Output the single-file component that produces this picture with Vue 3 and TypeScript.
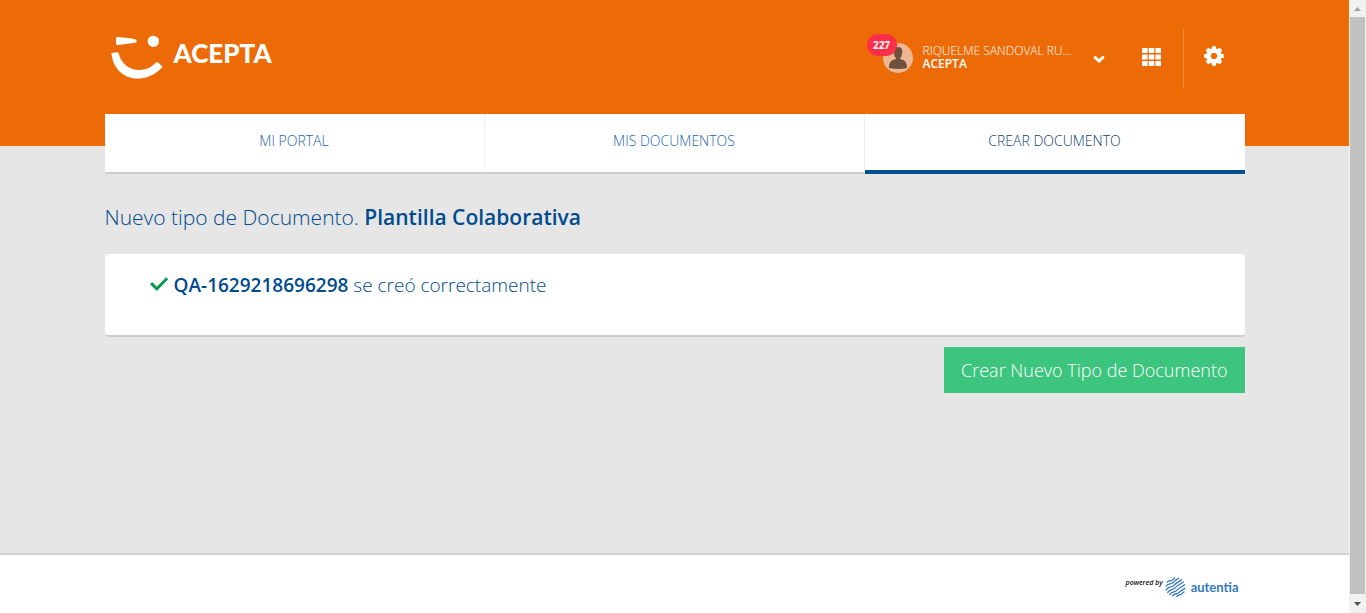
<script setup lang="ts">
interface Tab {
  label: string
  active: boolean
}

const tabs: Tab[] = [
  { label: 'MI PORTAL', active: false },
  { label: 'MIS DOCUMENTOS', active: false },
  { label: 'CREAR DOCUMENTO', active: true },
]

const user = { name: 'RIQUELME SANDOVAL RU...', company: 'ACEPTA', notifications: 227 }
const documentName = 'QA-1629218696298'
const gearTeeth = [0, 45, 90, 135, 180, 225, 270, 315]
</script>

<template>
  <div class="window">
    <div class="page">
      <header class="header">
        <div class="container">
          <div class="topbar">
            <a class="brand" href="#" aria-label="Acepta">
              <svg class="smile" viewBox="30 30 165 135" aria-hidden="true">
                <path d="M48 39 Q48 36 53 36 Q78 38 100 41 Q110 43 110 49 Q110 54 100 54 L54 60 Q48 61 48 56Z" fill="#fff" />
                <circle cx="160" cy="49" r="17" fill="#fff" />
                <path d="M34 84 L52 82 Q56 82 57 87 C67 137 133 151 165 115 Q170 109 175 113 L188 125 C141 180 45 175 34 84Z" fill="#fff" />
              </svg>
              <span class="brand-name">ACEPTA</span>
            </a>
            <div class="tools">
              <button class="user" type="button">
                <span class="avatar">
                  <svg viewBox="0 0 30 30" width="30" height="30" aria-hidden="true">
                    <circle cx="15" cy="15" r="15" fill="#ecb792" />
                    <path d="M15 4 C11 4 10 7 11 11 Q12 15 13 15 V16 C8 17 6 19 6 25 Q15 27 24 25 C24 19 22 17 17 16 V15 Q18 15 19 11 C20 7 19 4 15 4Z" fill="#6f503c" />
                  </svg>
                  <span class="badge">{{ user.notifications }}</span>
                </span>
                <span class="identity">
                  <span class="user-name">{{ user.name }}</span>
                  <strong>{{ user.company }}</strong>
                </span>
                <svg class="chevron" viewBox="0 0 12 8" width="12" height="8" aria-hidden="true">
                  <path d="M1.3 1.6 L6 6 L10.7 1.6" fill="none" stroke="#fff" stroke-width="2.9" />
                </svg>
              </button>
              <button class="apps" type="button" aria-label="Aplicaciones">
                <svg viewBox="0 0 19 18" width="19" height="18" fill="#fff" aria-hidden="true">
                  <template v-for="row in 3" :key="row">
                    <rect v-for="col in 3" :key="col" :x="(col - 1) * 6.7" :y="(row - 1) * 6.5" width="5.6" height="5" rx="0.4" />
                  </template>
                </svg>
              </button>
              <button class="settings" type="button" aria-label="Configuración">
                <svg viewBox="-10 -10 20 20" width="20" height="20" aria-hidden="true">
                  <circle r="5.4" fill="none" stroke="#fff" stroke-width="4.2" />
                  <path v-for="angle in gearTeeth" :key="angle" d="M-2.8 -6 L-1.8 -9.8 H1.8 L2.8 -6Z" fill="#fff" :transform="`rotate(${angle})`" />
                </svg>
              </button>
            </div>
          </div>
          <nav class="tabs">
            <a v-for="tab in tabs" :key="tab.label" href="#" class="tab" :class="{ active: tab.active }">{{ tab.label }}</a>
          </nav>
        </div>
      </header>

      <main class="container content">
        <h1>Nuevo tipo de Documento. <strong>Plantilla Colaborativa</strong></h1>
        <section class="card">
          <p>
            <svg class="check" viewBox="0 0 18 16" width="18" height="16" aria-hidden="true">
              <path d="M1 6.2 L6.8 11.8 L17.2 1.2" fill="none" stroke="#0b9a4b" stroke-width="3" />
            </svg>
            <span><strong>{{ documentName }}</strong> se creó correctamente</span>
          </p>
        </section>
        <div class="actions">
          <button class="create" type="button">Crear Nuevo Tipo de Documento</button>
        </div>
      </main>

      <footer class="footer">
        <div class="container footer-inner">
          <span class="powered">powered by</span>
          <svg class="mark" viewBox="0 0 66 64" width="21" height="20" fill="none" stroke="#3478bd" stroke-width="4.2" stroke-linecap="round" aria-hidden="true">
            <path d="M7 16 C15 8 15 17 22 10 L30 3" />
            <path d="M3 29 C12 18 18 26 26 17 S36 10 43 4" />
            <path d="M3 41 C14 27 20 36 29 26 S41 19 52 9" />
            <path d="M8 49 C18 36 23 44 33 34 S45 26 58 16" />
            <path d="M15 56 C24 44 30 51 38 42 S51 34 62 25" />
            <path d="M24 60 C32 50 38 57 45 49 S56 43 63 36" />
            <path d="M37 62 C44 55 48 59 53 54 L60 48" />
          </svg>
          <span class="autentia">autentia</span>
        </div>
      </footer>
    </div>

    <div class="scrollbar" aria-hidden="true">
      <svg viewBox="0 0 17 17" width="17" height="17"><path d="M5 11 L8.5 7 L12 11Z" fill="#a3a3a3" /></svg>
      <div class="thumb"></div>
      <svg viewBox="0 0 17 17" width="17" height="17"><path d="M5 6 L8.5 10 L12 6Z" fill="#505050" /></svg>
    </div>
  </div>
</template>

<style>
body {
  margin: 0;
  background: #e6e6e6;
}
</style>

<style scoped>
.window {
  display: flex;
  min-height: 100vh;
  font-family: "Open Sans", sans-serif;
  color: #004b8d;
}

.page {
  flex: 1;
  min-width: 0;
  display: flex;
  flex-direction: column;
  background: #e6e6e6;
}

.container {
  box-sizing: border-box;
  width: 100%;
  max-width: 1140px;
  margin: 0 auto;
}

button {
  padding: 0;
  border: 0;
  background: none;
  color: inherit;
  font: inherit;
  cursor: pointer;
}

a {
  text-decoration: none;
}

svg {
  display: block;
  flex: none;
}

.header {
  height: 146px;
  background: #ed6b06;
  color: #fff;
}

.topbar {
  display: flex;
  justify-content: space-between;
  align-items: center;
  height: 114px;
}

.brand {
  display: flex;
  align-items: center;
  gap: 9px;
  padding-left: 5px;
  color: #fff;
}

.smile {
  width: 55px;
  height: 45px;
}

.brand-name {
  padding-bottom: 8px;
  font: 900 26px/32px Lato, sans-serif;
}

.tools {
  display: flex;
  align-items: center;
  height: 60px;
  padding-top: 4px;
}

.user {
  display: flex;
  align-items: center;
  padding-bottom: 2px;
  text-align: left;
}

.avatar {
  position: relative;
}

.badge {
  position: absolute;
  top: -9px;
  left: -16px;
  width: 30px;
  border-radius: 11px;
  background: #fb2f47;
  font-size: 10px;
  font-weight: 700;
  line-height: 22px;
  text-align: center;
}

.identity {
  display: flex;
  flex-direction: column;
  width: 150px;
  margin-left: 10px;
  padding-bottom: 2px;
  font-size: 12px;
  line-height: 13px;
}

.user-name {
  font-weight: 300;
  white-space: nowrap;
}

.identity strong {
  font-weight: 600;
}

.chevron {
  margin: 2px 0 0 20px;
}

.apps {
  padding: 0 22px 4px 37px;
}

.settings {
  display: flex;
  align-items: center;
  height: 60px;
  padding: 0 21px 6px 20px;
  border-left: 1px solid #f28d3d;
}

.tabs {
  display: grid;
  grid-template-columns: repeat(3, 1fr);
}

.tab {
  box-sizing: border-box;
  height: 60px;
  border-right: 1px solid #efefef;
  border-bottom: 2px solid #ccc;
  background: #fff;
  color: #1d64b4;
  font-size: 14px;
  font-weight: 300;
  line-height: 54px;
  text-align: center;
}

.tab.active {
  border-right: 0;
  border-bottom: 4px solid #00508f;
  color: #0f3f70;
}

.content {
  flex: 1;
  padding-top: 56px;
}

h1 {
  margin: 0 0 22px;
  font-size: 21px;
  font-weight: 300;
  line-height: 30px;
}

h1 strong,
.card strong {
  font-weight: 600;
}

.card {
  padding: 16px 45px 35px;
  border-bottom: 2px solid #ccc;
  border-radius: 4px;
  background: #fff;
}

.card p {
  display: flex;
  align-items: center;
  gap: 6px;
  margin: 0;
  font-size: 19px;
  font-weight: 300;
  line-height: 30px;
}

.actions {
  display: flex;
  justify-content: flex-end;
  margin-top: 10px;
}

.create {
  padding: 10px 17px;
  background: #3dc47e;
  color: #fff;
  font-size: 18px;
  font-weight: 300;
  line-height: 26px;
}

.footer {
  border-top: 2px solid #d2d2d2;
  background: #fff;
}

.footer-inner {
  display: flex;
  justify-content: flex-end;
  align-items: center;
  height: 58px;
  padding: 6px 6px 0 0;
}

.powered {
  margin-right: 2px;
  padding-bottom: 8px;
  color: #111;
  font-size: 7px;
  font-style: italic;
  font-weight: 600;
  line-height: 10px;
}

.autentia {
  margin-left: 5px;
  color: #3478bd;
  font: 700 13px/16px Lato, sans-serif;
}

.scrollbar {
  box-sizing: border-box;
  display: flex;
  flex-direction: column;
  width: 17px;
  background: #f1f1f1;
}

.thumb {
  flex: 1;
  margin: 0 1px 2px;
  background: #c1c1c1;
}
</style>
